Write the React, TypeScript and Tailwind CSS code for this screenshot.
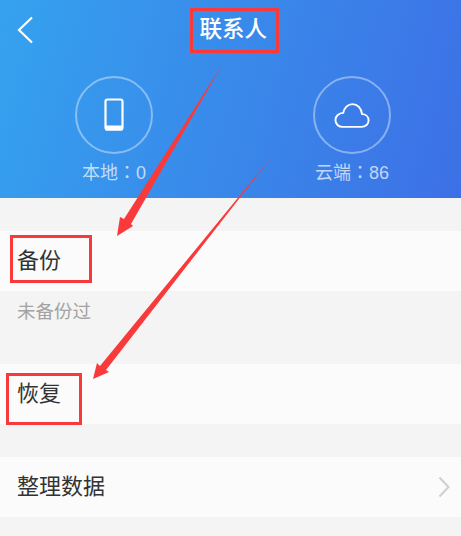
import React from 'react';

const cjk = "font-['Liberation_Sans','Noto_Sans_CJK_SC',sans-serif]";

const PhoneIcon = () => (
    <svg width="22" height="34" viewBox="0 0 22 34" fill="none">
        <rect x="2.5" y="1.5" width="17" height="30" rx="2" stroke="white" strokeWidth="2.2" />
        <path d="M2 27.5h18V31a1.5 1.5 0 0 1-1.5 1.5h-15A1.5 1.5 0 0 1 2 31z" fill="white" />
    </svg>
);

const CloudIcon = () => (
    <svg width="36" height="27" viewBox="0 0 38 28" fill="none">
        <path
            d="M9 26 H29 C33.5 26 36.5 23 36.5 19.2 C36.5 15.2 33.4 12.6 29.6 12.6 C28.9 6.4 24.8 2 19.6 2 C14.6 2 10.6 5.8 9.8 11.2 C5.2 11.4 1.5 14.6 1.5 18.8 C1.5 23 4.8 26 9 26 Z"
            stroke="white"
            strokeWidth="2"
            strokeLinejoin="round"
        />
    </svg>
);

const Stat: React.FC<{ name: string; value: string; icon: React.ReactNode }> = ({ name, value, icon }) => (
    <div className="flex flex-col items-center w-[120px]">
        <div className="w-[78px] h-[78px] rounded-full border-2 border-white/40 flex items-center justify-center">
            {icon}
        </div>
        <div className="text-[18px] leading-[24px] mt-[5px] text-white/70 whitespace-nowrap">
            {name}
            <span className="font-['Noto_Sans_CJK_TC',sans-serif]">：</span>
            {value}
        </div>
    </div>
);

const Row: React.FC<{ label: string; chevron?: boolean }> = ({ label, chevron }) => (
    <div className="h-[60px] bg-[#fbfbfb] flex items-center justify-between pl-[17px] pr-[11px]">
        <span className="text-[22px] leading-[30px] text-[#333333]">{label}</span>
        {chevron && (
            <svg width="12" height="22" viewBox="0 0 12 22" fill="none">
                <path d="M1.5 1.5 L10.5 11 L1.5 20.5" stroke="#cfcfcf" strokeWidth="2" />
            </svg>
        )}
    </div>
);

export default function App() {
    return (
        <div className={`relative w-[461px] h-[536px] overflow-hidden bg-[#f4f4f4] ${cjk}`}>
            <header className="h-[198px] bg-[linear-gradient(105deg,#35a2ee,#3d70e6)] px-[16px]">
                <div className="h-[60px] flex items-center justify-between">
                    <svg width="18" height="28" viewBox="0 0 18 28" fill="none" className="mt-[-1px]">
                        <path d="M16 1.5 L3 14 L16 26.5" stroke="white" strokeWidth="2.2" />
                    </svg>
                    <h1 className="text-[22.5px] leading-[30px] text-white font-medium mr-[178px]">联系人</h1>
                </div>
                <div className="flex justify-between pl-[38px] pr-[33px] mt-[16px]">
                    <Stat name="本地" value="0" icon={<PhoneIcon />} />
                    <Stat name="云端" value="86" icon={<CloudIcon />} />
                </div>
            </header>

            <div className="mt-[33px]">
                <Row label="备份" />
            </div>
            <div className="h-[73px] pl-[17px] pt-[8px] text-[18.5px] leading-[26px] text-[#a3a3a3]">未备份过</div>
            <Row label="恢复" />
            <div className="mt-[33px]">
                <Row label="整理数据" chevron />
            </div>

            {/* red annotations over the screenshot */}
            <div className="absolute left-[190px] top-[8px] w-[89px] h-[45px] border-[3px] border-[#f93a3a]" />
            <div className="absolute left-[10px] top-[235px] w-[82px] h-[48px] border-[3px] border-[#f93a3a]" />
            <div className="absolute left-[6px] top-[373px] w-[76px] h-[52px] border-[3px] border-[#f93a3a]" />
            <svg className="absolute inset-0" width="461" height="536" viewBox="0 0 461 536">
                <polygon points="222,65 131,224 133,226 117,236 120,217 124,219" fill="#f93a3a" />
                <polygon points="273,155 106,370 109,372 93,379 97,363 100,366" fill="#f93a3a" />
            </svg>
        </div>
    );
}
